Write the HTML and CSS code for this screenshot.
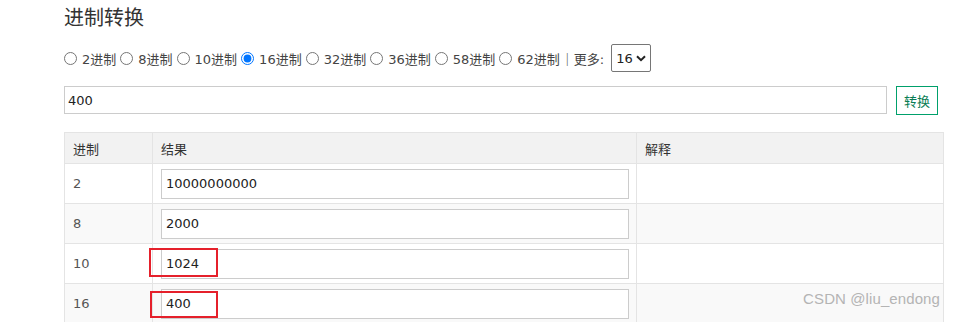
FILE: index.html
```html
<!DOCTYPE html>
<html lang="zh-CN">
<head>
  <meta charset="UTF-8">
  <title>进制转换</title>
  <link rel="stylesheet" href="styles.css">
</head>
<body>
  <div class="page">
    <h1>进制转换</h1>

    <div class="bases">
      <label><input type="radio" name="base"> 2进制</label>
      <label><input type="radio" name="base"> 8进制</label>
      <label><input type="radio" name="base"> 10进制</label>
      <label><input type="radio" name="base" checked> 16进制</label>
      <label><input type="radio" name="base"> 32进制</label>
      <label><input type="radio" name="base"> 36进制</label>
      <label><input type="radio" name="base"> 58进制</label>
      <label><input type="radio" name="base"> 62进制</label>
      <span class="more">｜更多:</span>
      <span class="select-wrap">
        <select class="more-select">
          <option>16</option>
        </select>
        <svg class="chevron" width="10" height="7" viewBox="0 0 10 7"><path d="M1 1.2 L5 5.2 L9 1.2" fill="none" stroke="#222" stroke-width="2"/></svg>
      </span>
    </div>

    <div class="convert">
      <input type="text" class="source" value="400">
      <button class="btn">转换</button>
    </div>

    <table class="result">
      <thead>
        <tr><th class="c1">进制</th><th class="c2">结果</th><th>解释</th></tr>
      </thead>
      <tbody>
        <tr><td>2</td><td><input type="text" value="10000000000"></td><td></td></tr>
        <tr><td>8</td><td><input type="text" value="2000"></td><td></td></tr>
        <tr><td>10</td><td><input type="text" value="1024"><span class="mark mark-a"></span></td><td></td></tr>
        <tr><td>16</td><td><input type="text" value="400"><span class="mark mark-b"></span></td><td></td></tr>
      </tbody>
    </table>

    <div class="watermark">CSDN @liu_endong</div>
  </div>
</body>
</html>
```

FILE: styles.css
```css
body {
  margin: 0;
  background: #fff;
  font-family: "DejaVu Sans", "Noto Sans CJK SC", sans-serif;
  font-size: 13px;
  color: #444;
}
.page {
  position: relative;
  width: 880px;
  padding: 0 0 0 64px;
  height: 322px;
  overflow: hidden;
}
h1 {
  margin: 0;
  padding-top: 2px;
  font-family: "Noto Sans CJK SC", sans-serif;
  font-size: 20px;
  font-weight: normal;
  line-height: 30px;
  color: #333;
}
.bases {
  display: flex;
  align-items: center;
  margin-top: 12px;
  height: 28px;
  white-space: nowrap;
}
.bases label {
  display: flex;
  align-items: center;
  margin-right: 4px;
}
.bases input {
  margin: 0 5px 0 0;
  width: 13px;
  height: 13px;
}
.more {
  margin-left: -3px;
  margin-right: 7px;
}
.select-wrap {
  position: relative;
  display: inline-block;
}
.more-select {
  display: block;
  appearance: none;
  width: 40px;
  height: 28px;
  font-family: "DejaVu Sans", sans-serif;
  font-size: 13px;
  color: #222;
  border: 1px solid #767676;
  border-radius: 2px;
  background: #fff;
  padding: 0 0 0 4px;
  outline: none;
}
.chevron {
  position: absolute;
  left: 25px;
  top: 11px;
  pointer-events: none;
}
.convert {
  display: flex;
  gap: 9px;
  margin-top: 14px;
}
.source {
  width: 823px;
  height: 28px;
  box-sizing: border-box;
  border: 1px solid #ccc;
  padding: 0 3px;
  font-family: "DejaVu Sans", sans-serif;
  font-size: 13px;
  color: #222;
  outline: none;
}
.btn {
  width: 42px;
  height: 29px;
  box-sizing: border-box;
  border: 1px solid #00a06b;
  background: #fff;
  color: #0a7d55;
  font-family: "Noto Sans CJK SC", sans-serif;
  font-size: 13px;
  font-weight: normal;
  padding: 0;
}
.result {
  margin-top: 17px;
  width: 880px;
  border-collapse: collapse;
  table-layout: fixed;
}
.result th, .result td {
  border: 1px solid #e4e4e4;
  padding: 0 8px;
  text-align: left;
}
.result th {
  height: 30px;
  background: #f2f2f2;
  font-family: "Noto Sans CJK SC", sans-serif;
  font-weight: normal;
  color: #333;
}
.result .c1 { width: 71px; }
.result .c2 { width: 467px; }
.result td {
  height: 39px;
  color: #555;
}
.result tbody tr:nth-child(even) td {
  background: #f9f9f9;
}
.result td input {
  width: 468px;
  height: 30px;
  box-sizing: border-box;
  border: 1px solid #ccc;
  padding: 0 4px;
  font-family: "DejaVu Sans", sans-serif;
  font-size: 13px;
  color: #222;
  background: #fff;
  outline: none;
  display: block;
}
.result td:nth-child(2) {
  position: relative;
}
.mark {
  position: absolute;
  border: 2px solid #e5202b;
  box-sizing: border-box;
}
.mark-a {
  left: -4px;
  top: 4px;
  width: 69px;
  height: 29px;
}
.mark-b {
  left: -3px;
  top: 7px;
  width: 68px;
  height: 27px;
}
.watermark {
  position: absolute;
  right: 4px;
  top: 290px;
  font-family: "Liberation Sans", sans-serif;
  font-size: 15px;
  letter-spacing: 0.1px;
  color: #b4b4b4;
}
```
